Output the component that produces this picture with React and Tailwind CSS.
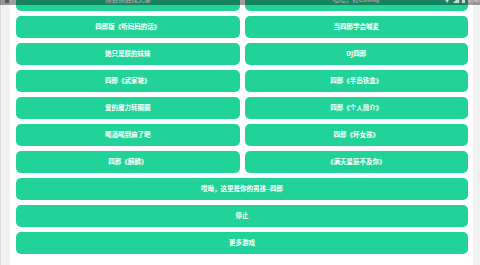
import React from "react";

const rows = [
  ["情侣情侣找头像", "嗯嗯，好emo呀"],
  ["四郎版《听妈妈的话》", "当四郎学会喊麦"],
  ["她只是朕的妹妹", "DJ四郎"],
  ["四郎《武家坡》", "四郎《半岛铁盒》"],
  ["爱的魔力转圈圈", "四郎《个人简介》"],
  ["喝酒喝到麻了吧", "四郎《坏女孩》"],
  ["四郎《麒麟》", "《满天星辰不及你》"],
];

const full = ["哎呦，这里是你的男孩--四郎", "停止", "更多游戏"];

function Btn({ children, wide }) {
  return (
    <div
      className={
        "h-[22px] rounded-[5px] bg-[#22d399] flex items-center justify-center text-white text-[6.5px] font-bold leading-none " +
        (wide ? "col-span-2" : "")
      }
    >
      {children}
    </div>
  );
}

export default function App() {
  return (
    <div
      className="relative w-[480px] h-[265px] overflow-hidden flex bg-[#f2f2f0]"
      style={{ fontFamily: '"Noto Sans", "Noto Sans CJK SC", sans-serif' }}
    >
      <div className="w-[10px] shrink-0 border-l border-[#dcdcda] bg-[#f2f2f0]" />
      <div className="w-[463px] shrink-0 bg-white pl-[6px] pr-[5px]">
        <div className="grid grid-cols-2 gap-[5px] -mt-[11px]">
          {rows.map(([a, b], i) => (
            <React.Fragment key={i}>
              <Btn>{a}</Btn>
              <Btn>{b}</Btn>
            </React.Fragment>
          ))}
          {full.map((t) => (
            <Btn key={t} wide>
              {t}
            </Btn>
          ))}
        </div>
      </div>
      <div className="flex-1 bg-[#f2f2f0]" />

      {/* status bar overlay */}
      <div className="absolute top-0 left-0 right-0 h-[5px] bg-[rgba(0,0,0,0.38)] overflow-hidden">
        <div className="absolute left-[5px] -top-[2px] w-[4px] h-[5px] bg-[#5a5a5a]" />
        <div className="absolute right-0 -top-[3px] flex items-center gap-[3px] text-[6px] leading-none text-[#d8d8d8]">
          <span>▼</span>
          <span>◢</span>
          <span className="w-[3px] h-[6px] bg-[#d8d8d8]" />
          <span>8:40</span>
        </div>
      </div>
    </div>
  );
}
